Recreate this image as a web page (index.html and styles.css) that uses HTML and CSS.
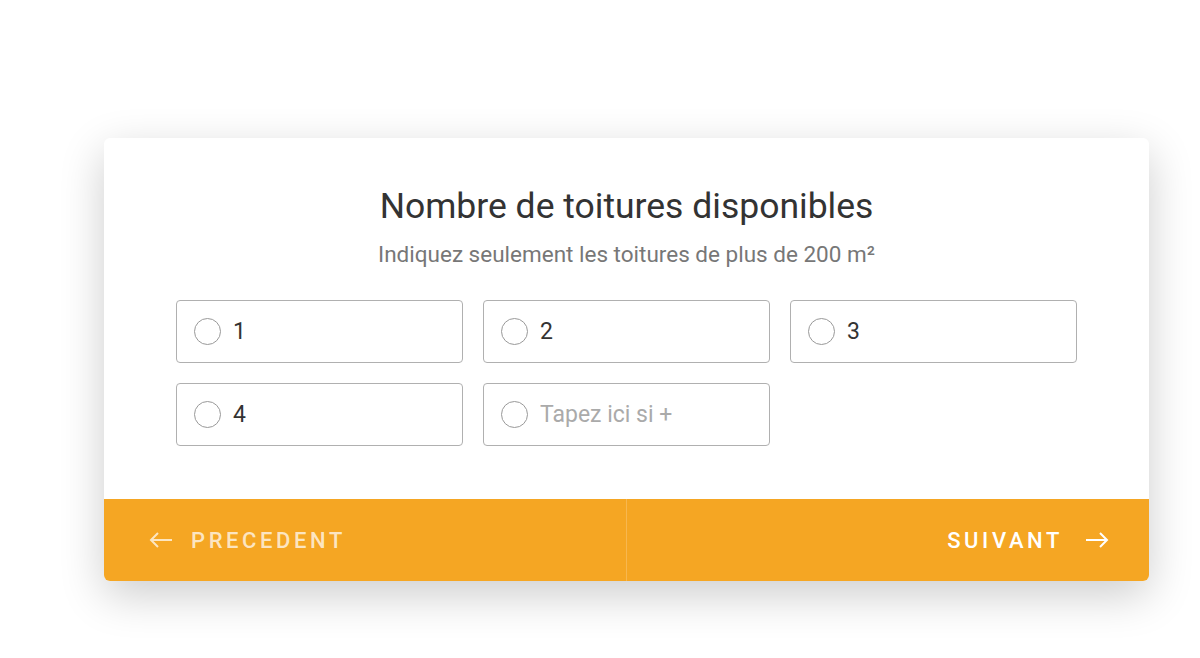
FILE: index.html
```html
<!DOCTYPE html>
<html lang="fr">
<head>
<meta charset="UTF-8">
<title>Nombre de toitures</title>
<link rel="stylesheet" href="styles.css">
</head>
<body>
<div class="card">
    <div class="body">
        <h2 class="title">Nombre de toitures disponibles</h2>
        <p class="subtitle">Indiquez seulement les toitures de plus de 200 m²</p>
        <div class="options">
            <label class="option"><span class="radio"></span><span class="label">1</span></label>
            <label class="option"><span class="radio"></span><span class="label">2</span></label>
            <label class="option"><span class="radio"></span><span class="label">3</span></label>
            <label class="option"><span class="radio"></span><span class="label">4</span></label>
            <label class="option"><span class="radio"></span><input type="text" class="other" placeholder="Tapez ici si +"></label>
        </div>
    </div>
    <div class="footer">
        <button class="nav prev">
            <svg width="24" height="18" viewBox="0 0 24 18"><path d="M23 9H2M9 2L2 9l7 7" fill="none" stroke="currentColor" stroke-width="2"/></svg>
            PRECEDENT
        </button>
        <button class="nav next">
            SUIVANT
            <svg width="24" height="18" viewBox="0 0 24 18"><path d="M1 9h21M15 2l7 7-7 7" fill="none" stroke="currentColor" stroke-width="2"/></svg>
        </button>
    </div>
</div>
</body>
</html>
```

FILE: styles.css
```css
html, body {
    margin: 0;
    background: #fff;
}
body {
    min-height: 658px;
    padding: 138px 0 0 104px;
    box-sizing: border-box;
    font-family: 'Roboto', sans-serif;
    color: #333;
}
.card {
    width: 1045px;
    background: #fff;
    border-radius: 6px;
    box-shadow: 0 14px 45px rgba(0, 0, 0, 0.2);
    overflow: hidden;
}
.body {
    padding: 48px 72px 53px;
}
.title {
    margin: 0;
    font-size: 35.5px;
    line-height: 40px;
    font-weight: 400;
    text-align: center;
    color: #333;
}
.subtitle {
    margin: 16px 0 34px;
    font-size: 22.5px;
    line-height: 24px;
    text-align: center;
    color: #777;
}
.options {
    display: grid;
    grid-template-columns: repeat(3, 1fr);
    gap: 20px;
}
.option {
    display: flex;
    align-items: center;
    height: 63px;
    box-sizing: border-box;
    padding: 0 17px;
    border: 1px solid #b0b0b0;
    border-radius: 4px;
    cursor: pointer;
}
.radio {
    width: 27px;
    height: 27px;
    box-sizing: border-box;
    border: 1.5px solid #999;
    border-radius: 50%;
    margin-right: 12px;
    flex-shrink: 0;
}
.label {
    font-size: 23px;
    color: #333;
}
.other {
    border: none;
    outline: none;
    padding: 0;
    width: 100%;
    font-family: 'Roboto', sans-serif;
    font-size: 23px;
    color: #333;
}
.other::placeholder {
    color: #aaa;
}
.footer {
    display: flex;
    height: 82px;
    background: #f5a623;
}
.nav {
    width: 50%;
    display: flex;
    align-items: center;
    gap: 18px;
    background: none;
    border: none;
    font-family: 'Roboto', sans-serif;
    font-size: 22px;
    font-weight: 500;
    letter-spacing: 3.6px;
    cursor: pointer;
}
.prev {
    padding-left: 45px;
    color: rgba(255, 255, 255, 0.72);
    border-right: 1px solid rgba(255, 255, 255, 0.2);
}
.next {
    justify-content: flex-end;
    padding-right: 40px;
    color: #fff;
}
.next svg {
    margin-left: 4px;
}
```
